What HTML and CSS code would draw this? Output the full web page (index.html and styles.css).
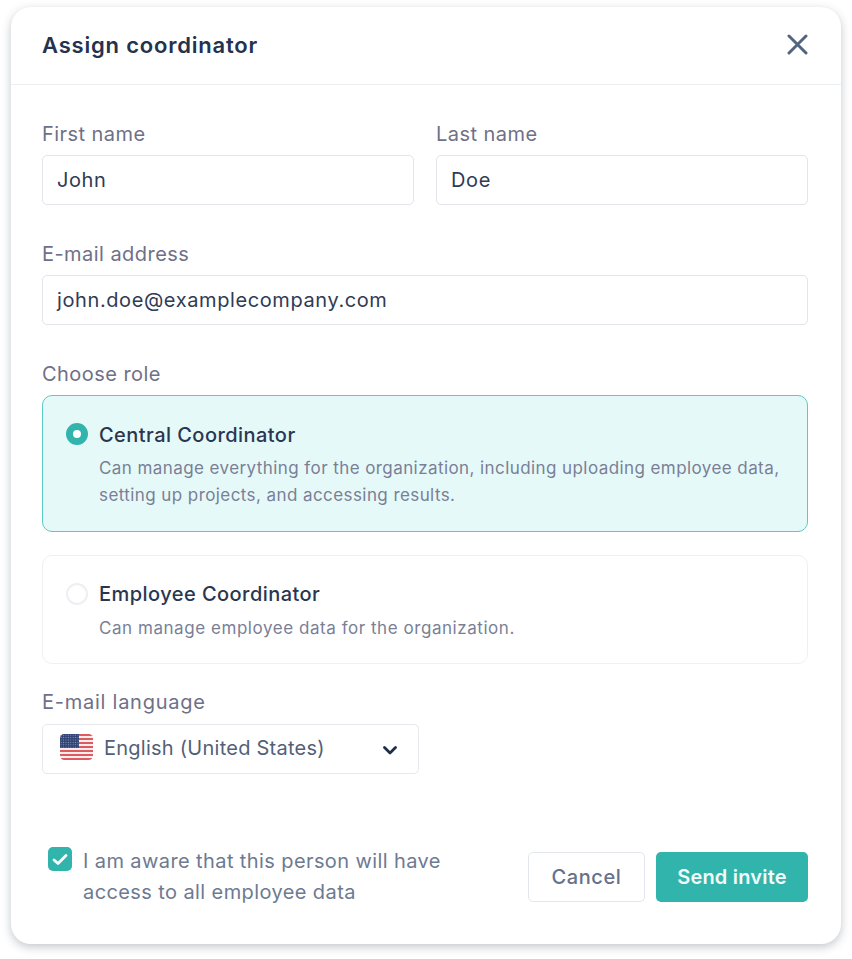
FILE: index.html
```html
<!DOCTYPE html>
<html lang="en">
<head>
<meta charset="utf-8">
<title>Assign coordinator</title>
<link rel="stylesheet" href="styles.css">
</head>
<body>
<main class="modal">
  <header class="modal-head">
    <h1 class="modal-title">Assign coordinator</h1>
    <button class="close" type="button" aria-label="Close">
      <svg width="21" height="21" viewBox="0 0 21 21"><path d="M2 2 19 19M19 2 2 19" fill="none" stroke="#526580" stroke-width="3" stroke-linecap="round"/></svg>
    </button>
  </header>
  <div class="modal-body">
    <div class="row">
      <div class="field"><div class="label">First name</div><div class="input">John</div></div>
      <div class="field"><div class="label">Last name</div><div class="input">Doe</div></div>
    </div>
    <div class="field gap-top"><div class="label">E-mail address</div><div class="input">john.doe@examplecompany.com</div></div>
    <div class="label gap-top">Choose role</div>
    <div class="role role-on">
      <span class="radio radio-on"></span>
      <div class="role-text">
        <div class="role-name">Central Coordinator</div>
        <div class="role-desc">Can manage everything for the organization, including uploading employee data, setting up projects, and accessing results.</div>
      </div>
    </div>
    <div class="role role-off">
      <span class="radio"></span>
      <div class="role-text">
        <div class="role-name">Employee Coordinator</div>
        <div class="role-desc">Can manage employee data for the organization.</div>
      </div>
    </div>
    <div class="label lang-label">E-mail language</div>
    <div class="select">
      <svg class="flag" width="33" height="26" viewBox="0 0 33 26">
        <defs>
          <clipPath id="fc"><rect width="33" height="26" rx="4.500"/></clipPath>
          <pattern id="stars" width="2.400" height="2.400" patternUnits="userSpaceOnUse"><circle cx="1.200" cy="1.200" r=".6" fill="#8d9bc0"/></pattern>
        </defs>
        <g clip-path="url(#fc)">
          <rect width="33" height="26" fill="#f6eeee"/>
          <path d="M0 1h33M0 5h33M0 9h33M0 13h33M0 17h33M0 21h33M0 25h33" stroke="#dd5a5f" stroke-width="2"/>
          <rect width="19" height="14" fill="#2f4273"/>
          <rect width="19" height="14" fill="url(#stars)"/>
        </g>
      </svg>
      <span class="select-text">English (United States)</span>
      <svg class="chev" width="14" height="9" viewBox="0 0 14 9"><path d="M1.500 1.500 7 7l5.500-5.500" fill="none" stroke="#1f2d4a" stroke-width="2.800" stroke-linecap="round" stroke-linejoin="round"/></svg>
    </div>
    <footer class="foot">
      <div class="consent">
        <span class="check"><svg width="16" height="13" viewBox="0 0 16 13"><path d="M2 7 6 10.500 14 2.500" fill="none" stroke="#fff" stroke-width="2.800" stroke-linecap="round" stroke-linejoin="round"/></svg></span>
        <span class="consent-text">I am aware that this person will have access to all employee data</span>
      </div>
      <div class="actions">
        <button class="btn btn-cancel" type="button">Cancel</button>
        <button class="btn btn-send" type="button">Send invite</button>
      </div>
    </footer>
  </div>
</main>
</body>
</html>
```
FILE: styles.css
```css
* { box-sizing: border-box; }
html, body { margin: 0; background: #fff; }
body {
  padding: 7px 11px 15px;
  font-family: Inter, "Open Sans", sans-serif;
  color: #2a3650;
}
.modal {
  height: 937px;
  background: #fff;
  border-radius: 20px;
  box-shadow: 0 3px 10px rgba(40, 50, 70, .28);
}
.modal-head {
  height: 78px;
  padding: 0 32px 0 31px;
  border-bottom: 1px solid #eceef2;
  display: flex;
  align-items: center;
  justify-content: space-between;
}
.modal-title {
  margin: 0 0 2px;
  font-size: 22px;
  font-weight: 600;
  letter-spacing: .8px;
  color: #25324e;
}
.close {
  width: 23px;
  height: 23px;
  padding: 0;
  margin-top: -2px;
  border: 0;
  background: none;
  display: flex;
  align-items: center;
  justify-content: center;
}
.modal-body { padding: 37px 33px 0 31px; }
.row { display: flex; gap: 22px; }
.row .field { flex: 1; }
.gap-top { margin-top: 37px; }
.label {
  height: 24px;
  margin-bottom: 9px;
  font-size: 20px;
  line-height: 24px;
  letter-spacing: .45px;
  color: #6f7088;
}
.input {
  height: 50px;
  padding: 0 14px;
  border: 1px solid #e2e5ec;
  border-radius: 5px;
  font-size: 20px;
  line-height: 48px;
  letter-spacing: .6px;
  color: #2f3b55;
}
.role {
  display: flex;
  gap: 11px;
  padding: 27px 14px 0 23px;
  border-radius: 10px;
}
.role-on { height: 137px; background: #e6f9f9; border: 1px solid #5ccac2; }
.role-off { height: 109px; margin-top: 23px; border: 1px solid #eff0f3; }
.radio {
  flex: none;
  width: 22px;
  height: 22px;
  border: 2px solid #eeeff2;
  border-radius: 50%;
  background: #fff;
}
.radio-on { border: 7px solid #30b4ac; }
.role-text { flex: 1; }
.role-name {
  font-size: 20px;
  line-height: 24px;
  font-weight: 500;
  letter-spacing: .45px;
  color: #2a3650;
}
.role-off .role-name { margin-top: -1px; }
.role-desc {
  margin-top: 8px;
  font-size: 17px;
  line-height: 27px;
  letter-spacing: .42px;
  color: #7a7f96;
}
.role-off .role-desc { margin-top: 9px; letter-spacing: .55px; }
.lang-label { margin-top: 26px; margin-bottom: 10px; letter-spacing: .75px; }
.select {
  width: 377px;
  height: 50px;
  padding: 0 21px 0 17px;
  border: 1px solid #e6e8ed;
  border-radius: 5px;
  display: flex;
  align-items: center;
}
.flag { flex: none; margin-top: -4px; }
.select-text {
  flex: 1;
  margin-left: 11px;
  margin-top: -2px;
  font-size: 20px;
  letter-spacing: .25px;
  color: #535f78;
}
.chev { flex: none; margin-top: 2px; }
.foot {
  margin-top: 73px;
  display: flex;
  justify-content: space-between;
  align-items: flex-start;
}
.consent { display: flex; gap: 11px; padding-left: 6px; }
.check {
  flex: none;
  width: 24px;
  height: 24px;
  border-radius: 5px;
  background: #30b4ac;
  display: flex;
  align-items: center;
  justify-content: center;
}
.consent-text {
  width: 390px;
  font-size: 20px;
  line-height: 31px;
  letter-spacing: .4px;
  color: #6d7a92;
  margin-top: -1px;
}
.actions { display: flex; gap: 11px; margin-top: 5px; }
.btn {
  height: 50px;
  border-radius: 5px;
  font-family: inherit;
  font-size: 20px;
  font-weight: 500;
}
.btn-cancel { width: 117px; background: #fff; border: 1px solid #e3e6ee; color: #66718a; letter-spacing: .6px; }
.btn-send { width: 152px; background: #30b4ac; border: 0; color: #f2fbfa; font-weight: 600; letter-spacing: .2px; }
```
